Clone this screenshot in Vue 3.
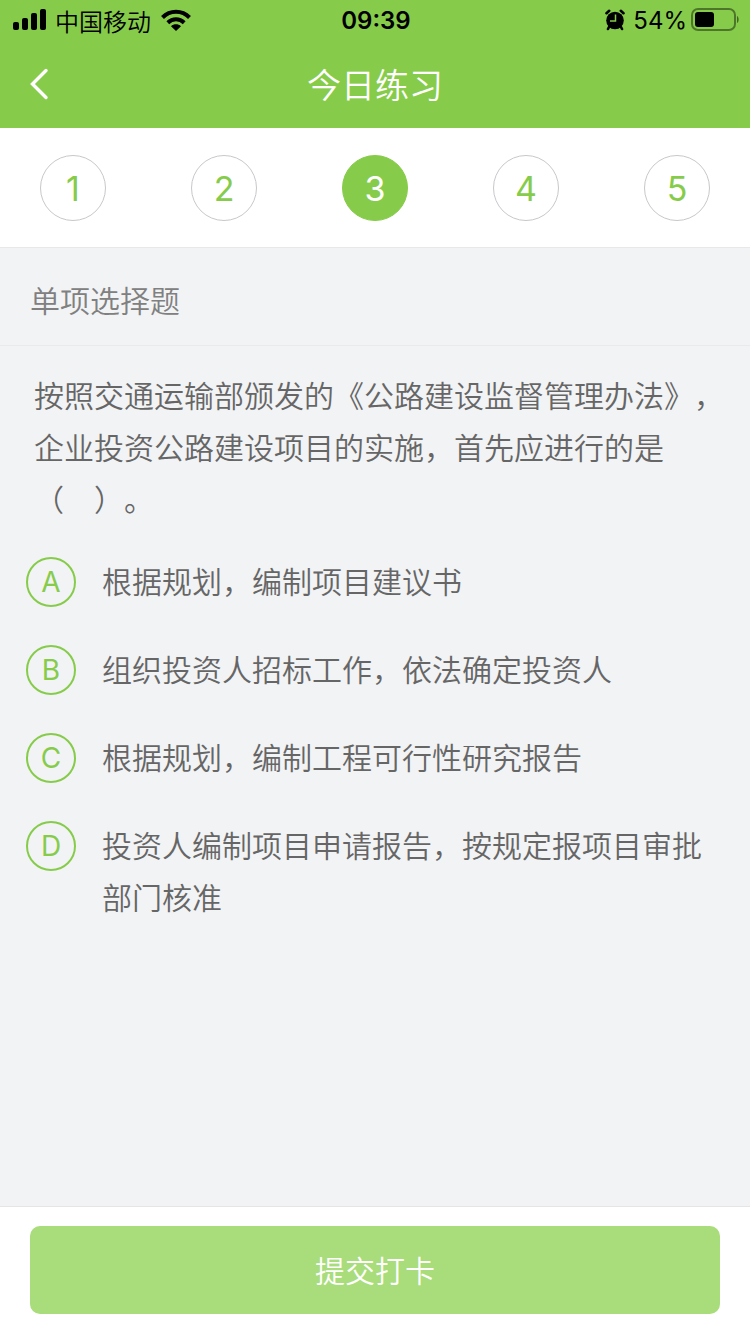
<script setup>
import { ref } from "vue"

// nomor soal
const steps = [1, 2, 3, 4, 5]
const current = ref(3)

// pilihan jawaban
const options = [
  { key: "A", text: "根据规划，编制项目建议书" },
  { key: "B", text: "组织投资人招标工作，依法确定投资人" },
  { key: "C", text: "根据规划，编制工程可行性研究报告" },
  { key: "D", text: "投资人编制项目申请报告，按规定报项目审批部门核准" }
]
const answer = ref("")
</script>

<template>
  <div class="page">
    <header class="top">
      <!-- status bar -->
      <div class="status">
        <div class="status-left">
          <svg width="34" height="22" viewBox="0 0 34 22">
            <rect x="0" y="13" width="6" height="8" rx="2" />
            <rect x="9" y="9" width="6" height="12" rx="2" />
            <rect x="18" y="4" width="6" height="17" rx="2" />
            <rect x="27" y="0" width="6" height="21" rx="2" />
          </svg>
          <span class="carrier">中国移动</span>
          <svg width="30" height="22" viewBox="0 0 30 22">
            <g fill="none" stroke="#000" stroke-width="4">
              <path d="M1.500 8.500C9 .8 21 .8 28.500 8.500" />
              <path d="M6.800 13.700C11.500 9.200 18.500 9.200 23.200 13.700" />
            </g>
            <path d="M10 17.200C12.800 14.600 17.200 14.600 20 17.200L15 22Z" />
          </svg>
        </div>
        <span class="clock">09:39</span>
        <div class="status-right">
          <svg width="20" height="22" viewBox="0 0 20 22">
            <circle cx="10" cy="11.500" r="8.800" />
            <path d="M1.500 4.200 4.200 1.800M18.500 4.200 15.800 1.800M4 18 3 20M16 18 17 20" stroke="#000" stroke-width="2.600" stroke-linecap="round" />
            <path d="M10.500 5.500V12H5" fill="none" stroke="#86cc4a" stroke-width="1.500" />
          </svg>
          <span class="percent">54%</span>
          <svg width="48" height="24" viewBox="0 0 48 24">
            <rect x="1" y="1" width="43" height="21" rx="6" fill="none" stroke="#000" stroke-opacity=".42" stroke-width="2" />
            <rect x="4" y="4" width="19" height="15" rx="3" />
            <path d="M46 8C48.200 9 48.200 14 46 15Z" fill-opacity=".5" />
          </svg>
        </div>
      </div>
      <!-- judul -->
      <div class="nav">
        <button class="back" aria-label="返回">
          <svg width="20" height="32" viewBox="0 0 20 32">
            <path d="M16 2.500 2.500 16 16 29.500" fill="none" stroke="#fff" stroke-width="3.400" stroke-linecap="round" />
          </svg>
        </button>
        <h1>今日练习</h1>
      </div>
    </header>

    <nav class="steps">
      <button
        v-for="n in steps"
        :key="n"
        class="step"
        :class="{ active: n === current }"
        @click="current = n"
      >{{ n }}</button>
    </nav>

    <h2 class="type">单项选择题</h2>

    <main class="content">
      <p class="question">按照交通运输部颁发的《公路建设监督管理办法》，企业投资公路建设项目的实施，首先应进行的是（　）。</p>
      <div class="options">
        <label v-for="item in options" :key="item.key" class="option">
          <span class="mark">
            <input type="radio" name="answer" :value="item.key" v-model="answer" />
            <span class="letter">{{ item.key }}</span>
          </span>
          <span class="text">{{ item.text }}</span>
        </label>
      </div>
    </main>

    <footer class="footer">
      <button class="submit">提交打卡</button>
    </footer>
  </div>
</template>

<style>
body {
  background: #f2f3f5;
}
</style>

<style scoped>
.page {
  display: flex;
  flex-direction: column;
  min-height: 100vh;
  background: #f2f3f5;
  color: #666;
  font-family: Inter, "Noto Sans CJK SC", sans-serif;
  font-weight: 350;
  text-spacing-trim: space-all;
}

button {
  font: inherit;
  border: none;
  padding: 0;
  cursor: pointer;
}
svg {
  display: block;
}
h1, h2, p {
  margin: 0;
  font-weight: 350;
}

.top {
  background: #86cc4a;
}
.status {
  display: grid;
  grid-template-columns: 1fr auto 1fr;
  align-items: center;
  height: 40px;
  padding: 0 11px 0 13px;
  color: #000;
  font-size: 24px;
}
.status-left, .status-right {
  display: flex;
  align-items: center;
}
.status-left {
  gap: 8px;
}
.status-right {
  justify-content: flex-end;
  gap: 4px;
}
.carrier {
  margin-right: 2px;
}
.clock {
  font-weight: 600;
}
.percent {
  margin-left: 4px;
  font-weight: 400;
}

.nav {
  display: grid;
  grid-template-columns: 80px 1fr 80px;
  align-items: center;
  height: 88px;
}
.back {
  padding-left: 30px;
  background: none;
}
.nav h1 {
  padding-bottom: 2px;
  color: #fff;
  font-size: 34px;
  text-align: center;
}

.steps {
  display: flex;
  justify-content: space-between;
  padding: 27px 40px 26px;
  background: #fff;
  border-bottom: 1px solid #e8e8e8;
}
.step {
  width: 66px;
  height: 66px;
  border: 1px solid #c8c8cc;
  border-radius: 50%;
  background: #fff;
  color: #86cc4a;
  font-size: 34px;
  font-weight: 400;
}
.step.active {
  border-color: #86cc4a;
  background: #86cc4a;
  color: #fff;
}

.type {
  padding: 10px 30px 0;
  border-bottom: 1px solid #e9eaec;
  color: #808080;
  font-size: 30px;
  line-height: 87px;
}

.content {
  flex: 1;
  padding: 24px 24px 30px 26px;
  font-size: 30px;
  line-height: 52px;
}
.question {
  padding-left: 8px;
}
.options {
  display: flex;
  flex-direction: column;
  gap: 36px;
  margin-top: 30px;
}
.option {
  display: flex;
  gap: 26px;
  cursor: pointer;
}
.mark {
  display: grid;
  flex: none;
  width: 50px;
  height: 52px;
  place-items: center;
}
.mark input, .letter {
  grid-area: 1 / 1;
}
.mark input {
  appearance: none;
  width: 50px;
  height: 50px;
  margin: 0;
  border: 2px solid #86cc4a;
  border-radius: 50%;
}
.mark input:checked {
  background: #86cc4a;
}
.letter {
  z-index: 1;
  color: #86cc4a;
  font-size: 28px;
  font-weight: 400;
}
.mark input:checked + .letter {
  color: #fff;
}

.footer {
  padding: 19px 30px 20px;
  background: #fff;
  border-top: 1px solid #e5e5e7;
}
.submit {
  width: 100%;
  height: 88px;
  padding-bottom: 2px;
  border-radius: 10px;
  background: #a9dc7a;
  color: #fff;
  font-size: 30px;
}
</style>
